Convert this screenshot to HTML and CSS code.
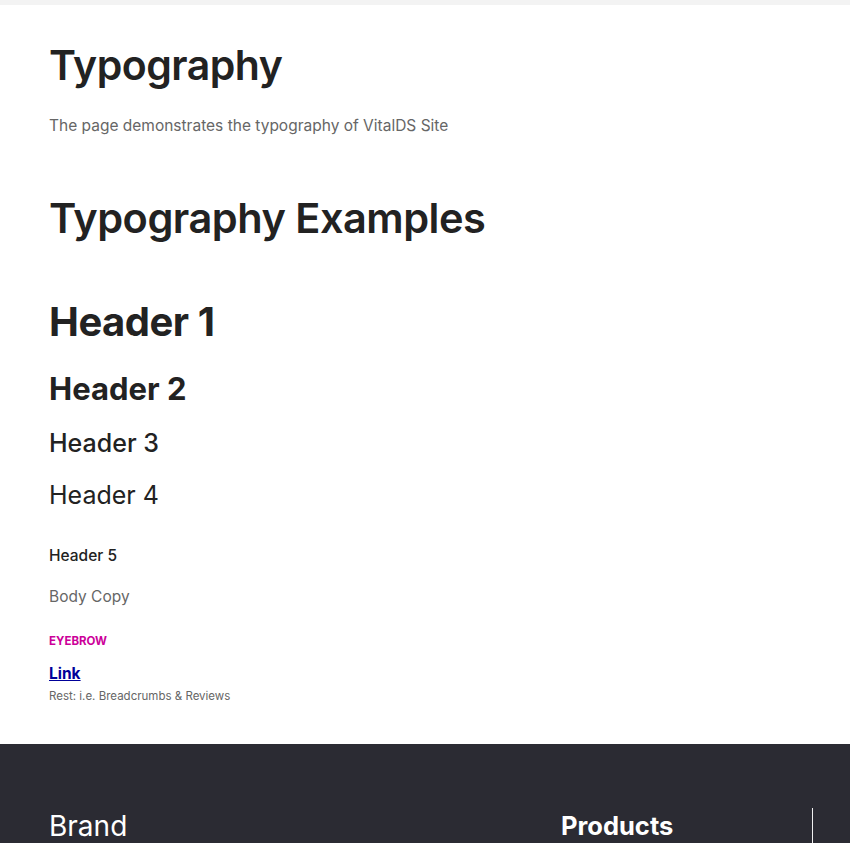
FILE: index.html
```html
<!DOCTYPE html>
<html lang="en">
<head>
<meta charset="utf-8">
<title>Typography</title>
<link rel="stylesheet" href="styles.css">
</head>
<body>
<div class="topbar"></div>
<main class="page">
  <header class="intro">
    <h1 class="page-title">Typography</h1>
    <p class="lead">The page demonstrates the typography of VitalDS Site</p>
  </header>
  <section class="examples">
    <h2 class="section-title">Typography Examples</h2>
    <div class="samples">
      <div class="h1">Header 1</div>
      <div class="h2">Header 2</div>
      <div class="h3">Header 3</div>
      <div class="h4">Header 4</div>
      <div class="h5">Header 5</div>
      <p class="body">Body Copy</p>
      <p class="eyebrow">EYEBROW</p>
      <a class="link" href="#">Link</a>
      <p class="rest">Rest: i.e. Breadcrumbs &amp; Reviews</p>
    </div>
  </section>
</main>
<footer class="footer">
  <div class="footer-brand">Brand</div>
  <div class="footer-col">
    <div class="footer-heading">Products</div>
  </div>
  <div class="footer-divider"></div>
</footer>
</body>
</html>
```
FILE: styles.css
```css
* { box-sizing: border-box; }
html, body { margin: 0; padding: 0; }
body {
  font-family: "Inter", "Noto Sans", sans-serif;
  color: #222222;
  background: #ffffff;
}
.topbar { height: 5px; background: #f3f3f3; }
.page { padding: 0 49px; height: 739px; }
.intro { padding-top: 32px; }
.page-title {
  margin: 0;
  font-size: 41px;
  font-weight: 600;
  line-height: 56px;
  letter-spacing: -0.5px;
}
.lead {
  margin: 23px 0 0;
  font-size: 15.5px;
  line-height: 20px;
  color: #666666;
}
.section-title {
  margin: 54px 0 0;
  font-size: 41.5px;
  font-weight: 600;
  line-height: 56px;
  letter-spacing: -0.5px;
}
.samples { display: flex; flex-direction: column; align-items: flex-start; padding-top: 48px; }
.h1 { font-size: 40px; font-weight: 700; line-height: 56px; letter-spacing: -0.5px; }
.h2 { font-size: 31px; font-weight: 700; line-height: 40px; margin-top: 19px; }
.h3 { font-size: 25px; font-weight: 500; line-height: 32px; margin-top: 18px; }
.h4 { font-size: 25px; font-weight: 400; line-height: 32px; margin-top: 20px; }
.h5 { font-size: 15.5px; font-weight: 500; line-height: 20px; margin-top: 35px; }
.body { margin: 21px 0 0; font-size: 15.5px; line-height: 20px; color: #666666; }
.eyebrow { margin: 26px 0 0; font-size: 11.5px; font-weight: 700; line-height: 16px; color: #cc0099; }
.link { margin-top: 15px; font-size: 15.5px; font-weight: 700; line-height: 20px; color: #000099; }
.rest { margin: 4px 0 0; font-size: 11.5px; line-height: 16px; color: #666666; }
.footer {
  display: flex;
  align-items: flex-start;
  background: #2b2b33;
  color: #ffffff;
  height: 99px;
  padding: 64px 0 0 49px;
  overflow: hidden;
}
.footer-brand { width: 512px; font-size: 28px; line-height: 36px; }
.footer-col { width: 251px; }
.footer-heading { font-size: 25.5px; font-weight: 700; line-height: 36px; }
.footer-divider { width: 1px; height: 60px; background: #f0f0f0; }
```
